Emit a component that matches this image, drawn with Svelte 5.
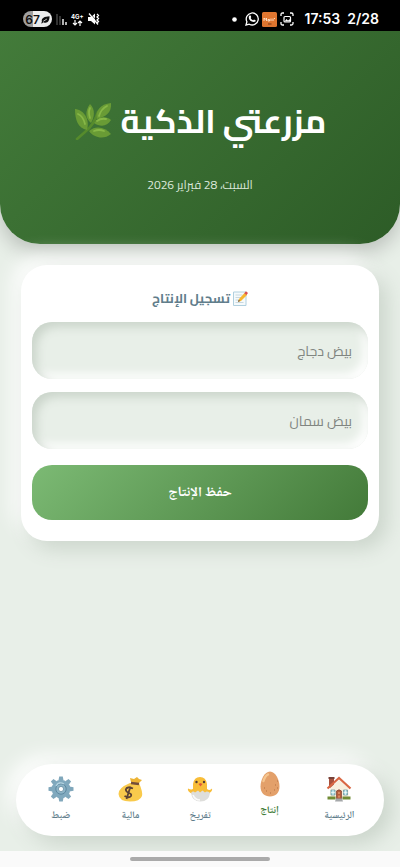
<script>
  let chicken = $state('');
  let quail = $state('');
  let active = $state('production');

  const tabs = [
    { id: 'home', label: 'الرئيسية' },
    { id: 'production', label: 'إنتاج' },
    { id: 'hatching', label: 'تفريخ' },
    { id: 'finance', label: 'مالية' },
    { id: 'settings', label: 'ضبط' }
  ];
  const teeth = [0, 45, 90, 135, 180, 225, 270, 315];
</script>

<div class="screen">
  <div class="status" dir="ltr">
    <div class="group">
      <span class="battery">67
        <svg width="9" height="9" viewBox="0 0 10 10"><path d="M1 8C0 3 4 2 9.500 1.500C9.500 7 7 10 2.500 8L1 9.500L0 9Z" fill="#111" /><path d="M2.500 7L6.500 4.500" stroke="#eee" stroke-width=".9" /></svg>
      </span>
      <svg width="11" height="12" viewBox="0 0 11 12"><path d="M1 1v11M4 3v9" stroke="#666" stroke-width="1" /><path d="M7 6v6M10 9v3" stroke="#fff" stroke-width="1.400" /></svg>
      <span class="network">
        <span>4G+</span>
        <svg width="11" height="6" viewBox="0 0 11 6"><path d="M3 0v5M1 3l2 2l2-2M8 6V1M6 3l2-2l2 2" fill="none" stroke="#fff" stroke-width="1.200" /></svg>
      </span>
      <svg width="12" height="12" viewBox="0 0 12 12"><path d="M0 4h3l4-3.500v11L3 8H0Z" fill="#fff" /><path d="M1.800 0L11 10.500" stroke="#000" stroke-width=".7" /><path d="M1 .5L10 11.500" stroke="#fff" stroke-width="1.300" /><path d="M9 1l1.500 1.500L9 4l1.500 1.500L9 7l1.500 1.500L9 10" fill="none" stroke="#fff" stroke-width="1.300" /></svg>
    </div>
    <div class="group end">
      <svg class="dot" width="5" height="5" viewBox="0 0 5 5"><circle cx="2.500" cy="2.500" r="2.300" fill="#fff" /></svg>
      <svg width="14" height="14" viewBox="0 0 14 14"><path d="M1 13l.9-3.300A6 6 0 1 1 4.300 12.200Z" fill="none" stroke="#fff" stroke-width="1.300" /><path d="M4.300 3.700q1-.8 1.500.3l.4 1q0 .5-.6 1q.9 1.700 2.500 2.300l.9-.9l1.600.8q.4 1.700-1.800 1.900Q4.400 9.500 3.800 6Q3.500 4.500 4.300 3.700Z" fill="#fff" /></svg>
      <svg width="15" height="15" viewBox="0 0 15 15"><rect width="15" height="15" rx="1.500" fill="#e07630" /><path d="M2 9V6l1.200 1.500L4.500 6v3M6 7.500h1.500V9H6ZM9 9V6.500M11 9V6.500M12.500 6v1" fill="none" stroke="#ffe6cf" stroke-width=".9" /><path d="M6 12h3.500" stroke="#7d3512" /></svg>
      <svg width="14" height="14" viewBox="0 0 14 14"><path d="M1 4V2.500Q1 1 2.500 1H4M10 1h1.500Q13 1 13 2.500V4M13 10v1.500q0 1.500-1.500 1.500H10M4 13H2.500Q1 13 1 11.500V10" fill="none" stroke="#fff" stroke-width="1.300" /><rect x="4" y="4.500" width="6.500" height="5.500" rx="1" fill="none" stroke="#fff" stroke-width="1.200" /><path d="M4.500 9.500L6.500 7L8 8.500L10 7V9.500Z" fill="#fff" /></svg>
      <span class="clock time">17:53</span>
      <span class="clock">2/28</span>
    </div>
  </div>

  <header>
    <h1>
      <span>مزرعتي الذكية</span>
      <svg width="38" height="38" viewBox="0 0 38 38" aria-hidden="true">
        <path d="M3 37L11 30Q20 23 24 10" fill="none" stroke="#568b2c" stroke-width="2.600" stroke-linecap="round" />
        <g fill="#699b35">
          <path d="M37 1C38 11 31 15 23 17C21 9 26 2 37 1Z" />
          <path d="M16 2C22 8 20 16 17 21C11 16 11 9 16 2Z" />
          <path d="M1 7C10 8 16 17 13 28C4 26 1 18 1 7Z" />
          <path d="M20 21C26 13 33 15 37 18C33 25 26 25 20 21Z" />
          <path d="M15 29C22 23 31 25 37 32C30 38 20 36 15 29Z" />
        </g>
        <path d="M25 14Q27 7 33 4M16 16Q14 10 16 6M11 22Q9 14 4 12M23 19Q27 16 32 17M20 29Q25 27 30 29" fill="none" stroke="#87b847" stroke-width="1.800" stroke-linecap="round" />
      </svg>
    </h1>
    <p>السبت، 28 فبراير 2026</p>
  </header>

  <main>
    <form class="card" onsubmit={(e) => e.preventDefault()}>
      <h2>
        <svg width="15" height="15" viewBox="0 0 15 15" aria-hidden="true">
          <path d="M.5 1h12.500v13.500H.5Z" fill="#f5fafc" stroke="#b1d0df" /><path d="M2.500 4h7M2.500 6.500h6M2.500 9h4M2.500 11.500h8" stroke="#b7c9d2" stroke-width=".7" /><path d="M5 11L6 8L11.500 2L14 4L8 10Z" fill="#f6b631" /><path d="M11.200 2.300L13 .3L15 2L13.500 4Z" fill="#db5150" /><path d="M5 11l.7-2.200L7 10Z" fill="#615047" />
        </svg>
        <span>تسجيل الإنتاج</span>
      </h2>
      <input type="number" aria-label="بيض دجاج" placeholder="بيض دجاج" bind:value={chicken} />
      <input type="number" aria-label="بيض سمان" placeholder="بيض سمان" bind:value={quail} />
      <button class="save" type="submit">حفظ الإنتاج</button>
    </form>
  </main>

  <nav>
    {#each tabs as tab (tab.id)}
      <button class="tab" class:active={active === tab.id} onclick={() => (active = tab.id)}>
        <svg width="26" height="26" viewBox="0 0 26 26" aria-hidden="true">
          {#if tab.id === 'home'}
            <path d="M3 2h5v10H3Z" fill="#a7503b" /><path d="M2.500 1h6v2h-6Z" fill="#784239" />
            <path d="M4 12L13 4L22.500 12V23H4Z" fill="#f8efdd" />
            <path d="M1.500 12.500L13 2L24.500 12.500" fill="none" stroke="#d96743" stroke-width="2.200" />
            <path d="M5 14h4v5H5ZM17.500 14h4v5h-4Z" fill="#a9dbe2" stroke="#668f9b" stroke-width=".7" /><path d="M7 14v5M19.500 14v5M5 16.500h4M17.500 16.500h4" stroke="#fff" stroke-width=".6" />
            <path d="M10.500 23v-8q2.500-2.500 5 0v8Z" fill="#b55c3b" stroke="#813f31" stroke-width=".7" /><path d="M12 16h2v2h-2ZM12 19.500h2v2h-2Z" fill="#d98760" />
            <path d="M1.500 20.500h8v3h-8ZM16.500 20.500h8v3h-8Z" fill="#718b35" /><path d="M10 22.500h6l1 3H9Z" fill="#a5a8aa" />
          {:else if tab.id === 'production'}
            <path d="M13 .5C7.500 .5 3.500 9 3.500 15.500C3.500 22 7.500 25.500 13 25.500S22.500 22 22.500 15.500C22.500 9 18.500 .5 13 .5Z" fill="#e3a06a" />
            <path d="M6.500 10Q8 5 11 3.500" fill="none" stroke="#f5c690" stroke-width="2.400" stroke-linecap="round" />
            <path d="M20 10h.8M18 14h.8M9 20h.8M13 22h.8M17 19h.8M20 17h.8M7 17h.8" stroke="#a96437" />
          {:else if tab.id === 'hatching'}
            <path d="M6 13V8Q7 1 13 1T20 8V13Q23 15 25 12.500Q26 15 21 18H5Q0 15 1 12.500Q4 14 6 13Z" fill="#f8bd38" />
            <path d="M4 17Q6 14.500 8 16.500L11 14.500L13 16.500L15.500 14.500L18 16.500Q20 14.500 23 17Q22 25.500 13.500 25.500T4 17Z" fill="#dededb" /><path d="M6 19Q8 24 13 24" fill="none" stroke="#fafafa" stroke-width="1.700" />
            <path d="M11.500 8L13.500 7L15.500 8L13.500 10.500Z" fill="#e35a38" /><circle cx="9.500" cy="6" r="1.200" fill="#503a36" /><circle cx="17" cy="6" r="1.200" fill="#503a36" />
          {:else if tab.id === 'finance'}
            <path d="M14 6L13 2L17 3L20 1L22 3L25 4L21 8Z" fill="#edb434" />
            <path d="M13 7H22Q26 16 25 20Q23 25.500 13 25.500Q2 25.500 1.500 18Q1 12 13 7Z" fill="#f9ca4c" /><path d="M14 7l8 1" stroke="#744e39" stroke-width="2.400" />
            <path d="M16 12.500Q10 10 8.800 13.500Q9 16 12 17Q15 18 14 20Q12 22.500 7.500 20M13.500 10.500L9.500 23" fill="none" stroke="#5d4335" stroke-width="1.800" />
          {:else}
            {#each teeth as angle}
              <path d="M10.500 4.500L11.200 .5H14.800L15.500 4.500Z" fill="#80a7bb" transform={`rotate(${angle} 13 13)`} />
            {/each}
            <circle cx="13" cy="13" r="6.800" fill="none" stroke="#80a9be" stroke-width="5" />
            <circle cx="13" cy="13" r="5.200" fill="#8cb4c7" stroke="#5d88a0" stroke-width="1" />
            <path d="M8 10Q11 5 16 8" fill="none" stroke="#b4d3e0" stroke-width="1.300" /><circle cx="13" cy="13" r="2.600" fill="#fff" stroke="#648ca0" stroke-width=".8" />
          {/if}
        </svg>
        <span>{tab.label}</span>
      </button>
    {/each}
  </nav>

  <div class="gesture"><span></span></div>
</div>

<style>
  :global(body) { margin: 0; background: #e8efe8; }
  .screen {
    direction: rtl;
    min-height: 100vh;
    display: flex;
    flex-direction: column;
    background: #e8efe8;
    font-family: "Cairo", "DejaVu Sans", sans-serif;
  }
  .screen * { box-sizing: border-box; }
  svg { display: block; flex: none; }
  input { font-family: inherit; border: 0; margin: 0; }
  button { font-family: "Noto Naskh Arabic UI", "Noto Naskh Arabic", "DejaVu Sans", sans-serif; border: 0; margin: 0; }

  .status {
    height: 31px;
    padding: 7px 21px 0 23px;
    display: flex;
    justify-content: space-between;
    align-items: flex-start;
    background: #000;
    color: #fff;
    font-family: Inter, sans-serif;
  }
  .group { display: flex; align-items: center; gap: 4px; height: 24px; }
  .end { gap: 3px; }
  .battery {
    display: flex;
    align-items: center;
    justify-content: center;
    gap: 1px;
    width: 29px;
    height: 16px;
    border-radius: 8px;
    background: linear-gradient(90deg, #a0a0a0 33%, #eee 33%);
    color: #111;
    font-size: 12px;
    font-weight: 600;
  }
  .network { display: flex; flex-direction: column; align-items: center; font-size: 6px; line-height: 7px; font-weight: 700; }
  .dot { margin-right: 5px; }
  .clock { font-size: 14px; line-height: 20px; font-weight: 600; margin-left: 4px; }
  .time { margin-left: 8px; }

  header {
    height: 213px;
    padding: 64px 20px 0;
    border-radius: 0 0 40px 40px;
    background: linear-gradient(135deg, #437b3a, #2d5c27);
    box-shadow: 0 8px 20px rgba(0, 0, 0, 0.2);
    color: #fff;
    text-align: center;
  }
  h1 {
    margin: 0;
    display: flex;
    justify-content: center;
    align-items: center;
    gap: 9px;
    font-size: 33px;
    line-height: 52px;
    font-weight: 700;
    white-space: nowrap;
  }
  header p { margin: 28px 0 0; font-size: 12px; line-height: 20px; color: #dae6d8; }

  main { padding: 21px 21px 24px; }
  .card {
    padding: 21px 11px;
    display: flex;
    flex-direction: column;
    border-radius: 26px;
    background: #fff;
    box-shadow: 8px 8px 20px #cbd5cb, -8px -8px 20px #fff;
  }
  h2 {
    margin: 0 0 12px;
    display: flex;
    align-items: center;
    justify-content: center;
    gap: 3px;
    font-size: 13px;
    line-height: 24px;
    font-weight: 700;
    color: #607d8b;
  }
  input {
    width: 100%;
    height: 57px;
    margin-bottom: 13px;
    padding: 0 16px;
    border-radius: 20px;
    background: #e8efe8;
    box-shadow: inset 5px 5px 10px #cbd5cb, inset -5px -5px 10px #fff;
    font-size: 14px;
    color: #333;
    outline: 0;
    appearance: textfield;
  }
  input::placeholder { color: #808580; opacity: 1; }
  .save {
    height: 55px;
    margin-top: 3px;
    border-radius: 20px;
    background: linear-gradient(135deg, #7cba74, #437a39);
    color: #fff;
    font-size: 14px;
    font-weight: 700;
  }

  nav {
    height: 72px;
    margin: auto 16px 15px;
    padding: 0 10px;
    display: flex;
    border-radius: 36px;
    background: #fff;
    box-shadow: 8px 8px 20px #cbd5cb, -8px -8px 20px #fff;
  }
  .tab {
    flex: 1;
    padding: 12px 0 0;
    display: flex;
    flex-direction: column;
    align-items: center;
    gap: 5px;
    background: none;
    color: #607d8b;
    font-size: 10px;
    line-height: 16px;
    font-weight: 600;
  }
  .active { padding-top: 7px; color: #437d3a; font-weight: 700; }
  .gesture {
    height: 16px;
    display: flex;
    justify-content: center;
    align-items: center;
    background: #fafafa;
  }
  .gesture span { width: 140px; height: 4px; border-radius: 2px; background: #aaa; }
</style>
